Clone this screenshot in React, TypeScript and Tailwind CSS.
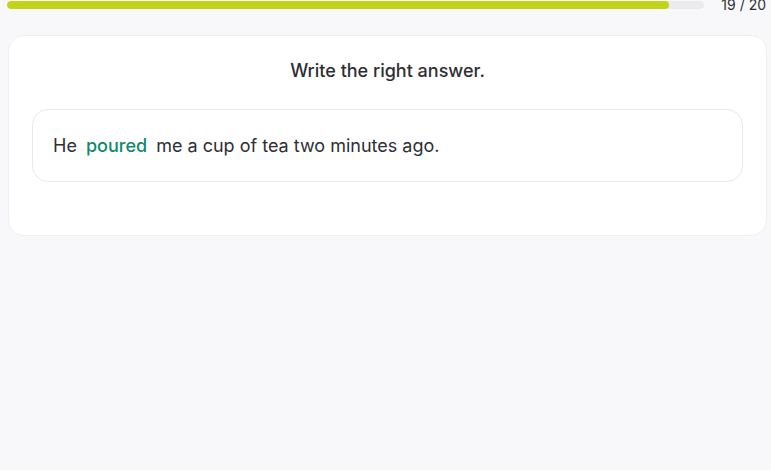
import React from 'react';

const CURRENT = 19;
const TOTAL = 20;

export default function App() {
  const pct = (CURRENT / TOTAL) * 100;

  return (
    <div className="min-h-screen bg-[#f8f8fa] font-['Inter','Liberation_Sans',sans-serif] text-[#2e2e33]">
      <div className="-mt-[5px] flex items-center gap-[17px] pl-[7px] pr-[5px]">
        <div className="h-2 flex-1 overflow-hidden rounded-full bg-[#ebebed]">
          <div className="h-full rounded-full bg-[#c2d31b]" style={{ width: `${pct}%` }} />
        </div>
        <span className="text-sm leading-5">
          {CURRENT} / {TOTAL}
        </span>
      </div>

      <div className="mt-[20px] ml-2 mr-[4px] rounded-2xl border border-[#efeff1] bg-white px-[23px] pt-[23px] pb-[53px]">
        <h2 className="text-center text-lg font-medium leading-6">Write the right answer.</h2>
        <div className="mt-[26px] flex h-[73px] items-center rounded-2xl border border-[#e9e9ec] px-5 text-lg">
          <p className="mt-[1px]">
            He <span className="mx-[4px] font-medium text-[#0f8a6a]">poured</span> me a cup of tea two minutes ago.
          </p>
        </div>
      </div>
    </div>
  );
}
